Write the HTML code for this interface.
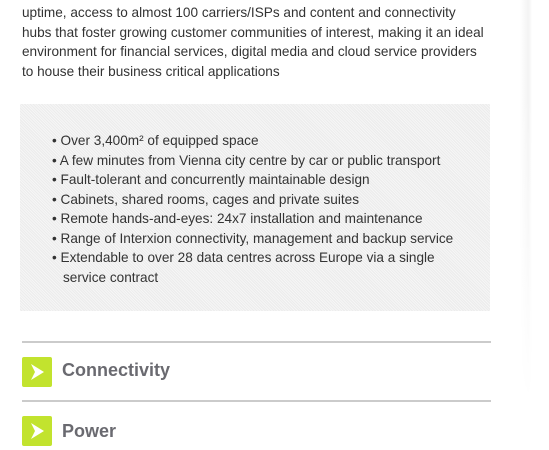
<!DOCTYPE html>
<html><head><style>
body{margin:0;width:549px;height:450px;overflow:hidden;background:#fff;font-family:"Liberation Sans",sans-serif;position:relative}
.shadow{position:absolute;left:520px;top:0;width:12px;height:450px;background:linear-gradient(to right,#fff,#f3f3f3 70%,#f8f8f8 85%,#fff);-webkit-mask:linear-gradient(#000 20%,transparent 90%);}
.p{position:absolute;left:22px;top:-16px;width:500px;font-size:13.6px;line-height:19.4px;color:#333;white-space:nowrap}
.box{position:absolute;left:20px;top:104px;width:470px;height:207px;background-color:#ececec;background-image:repeating-linear-gradient(45deg,rgba(255,255,255,.5) 0 1px,transparent 1px 2px)}
ul{margin:0;padding:0;position:absolute;left:52px;top:131px;width:430px;font-size:13.6px;line-height:19.5px;color:#333;list-style:none;white-space:nowrap}
li{padding-left:11px;text-indent:-11px}
li:before{content:"• ";}
.hr{position:absolute;left:22px;width:469px;height:2px;background:#cbcbcb}
.ic{position:absolute;left:22px;width:30px;height:30px;background:#c2e32e;border-radius:2px}
.ic svg{position:absolute;left:0;top:0}
.h{position:absolute;left:62px;font-size:18px;font-weight:bold;color:#6a6a70}
</style></head><body>
<div class="shadow"></div>
<div class="p">&nbsp;<br>uptime, access to almost 100 carriers/ISPs and content and connectivity<br>hubs that foster growing customer communities of interest, making it an ideal<br>environment for financial services, digital media and cloud service providers<br>to house their business critical applications</div>
<div class="box"></div>
<ul>
<li>Over 3,400m² of equipped space</li>
<li>A few minutes from Vienna city centre by car or public transport</li>
<li>Fault-tolerant and concurrently maintainable design</li>
<li>Cabinets, shared rooms, cages and private suites</li>
<li>Remote hands-and-eyes: 24x7 installation and maintenance</li>
<li>Range of Interxion connectivity, management and backup service</li>
<li>Extendable to over 28 data centres across Europe via a single<br>service contract</li>
</ul>
<div class="hr" style="top:341px"></div>
<div class="ic" style="top:357px"><svg width="30" height="30"><path d="M9 7 L22 15 L9 23 L13 15 Z" fill="#fff"/></svg></div>
<div class="h" style="top:360px">Connectivity</div>
<div class="hr" style="top:400px"></div>
<div class="ic" style="top:416px"><svg width="30" height="30"><path d="M9 7 L22 15 L9 23 L13 15 Z" fill="#fff"/></svg></div>
<div class="h" style="top:421px">Power</div>
</body></html>
